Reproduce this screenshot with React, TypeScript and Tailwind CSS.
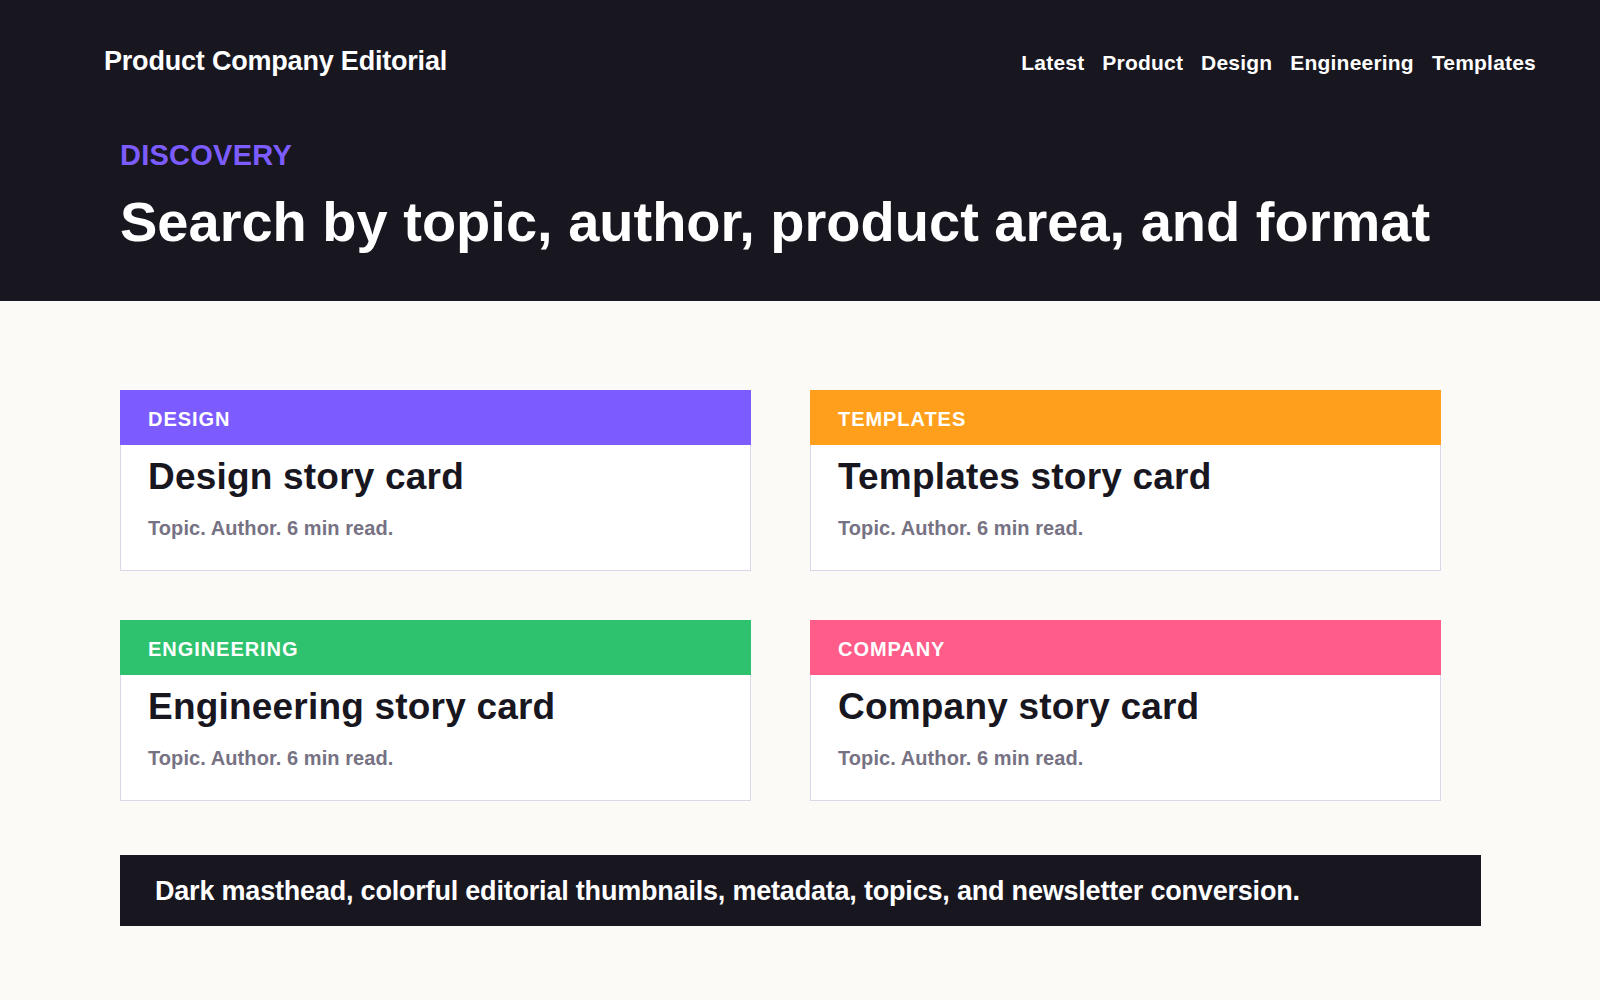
export default function App() {
  const cards = [
    { t: "DESIGN", h: "Design story card", c: "bg-[#7c5cff]" },
    { t: "TEMPLATES", h: "Templates story card", c: "bg-[#ff9f1c]" },
    { t: "ENGINEERING", h: "Engineering story card", c: "bg-[#2ec26f]" },
    { t: "COMPANY", h: "Company story card", c: "bg-[#ff5c8a]" },
  ];
  return (
    <div className="min-h-[1000px] bg-[#fbfaf6] font-[Arial,Helvetica,sans-serif] font-bold">
      <header className="h-[301px] bg-[#18161f] text-white">
        <div className="flex items-start justify-between pl-[104px] pr-[64px] pt-[44px]">
          <div className="text-[27px] leading-[34px] tracking-[-0.2px]">Product Company Editorial</div>
          <nav className="mt-[5px] flex gap-[18px] text-[21px] leading-[28px] tracking-[0.2px]">
            <span>Latest</span>
            <span>Product</span>
            <span>Design</span>
            <span>Engineering</span>
            <span>Templates</span>
          </nav>
        </div>
        <div className="px-[120px] pt-[59px]">
          <div className="text-[29px] leading-[36px] tracking-[0.25px] text-[#7c5cff]">DISCOVERY</div>
          <h1 className="mt-[16px] text-[56px] leading-[66px]">Search by topic, author, product area, and format</h1>
        </div>
      </header>
      <main className="px-[120px] pt-[89px]">
        <div className="grid w-[1321px] grid-cols-2 gap-x-[59px] gap-y-[49px]">
          {cards.map((c) => (
            <article key={c.t} className="h-[181px] border border-[#d9d7e8] bg-white">
              <div className={`-mx-px -mt-px flex h-[55px] items-center px-[28px] pt-[3px] text-[20px] tracking-[0.95px] text-white ${c.c}`}>{c.t}</div>
              <div className="px-[27px]">
                <h2 className="mt-[9px] text-[37px] leading-[46px] tracking-[0.2px] text-[#18161f]">{c.h}</h2>
                <p className="mt-[15px] text-[20px] leading-[26px] tracking-[0.08px] text-[#767283]">Topic. Author. 6 min read.</p>
              </div>
            </article>
          ))}
        </div>
        <div className="mt-[54px] flex h-[71px] w-[1361px] items-center bg-[#18161f] px-[35px] pt-[2px] text-[27px] tracking-[-0.2px] text-white">
          Dark masthead, colorful editorial thumbnails, metadata, topics, and newsletter conversion.
        </div>
      </main>
    </div>
  );
}
